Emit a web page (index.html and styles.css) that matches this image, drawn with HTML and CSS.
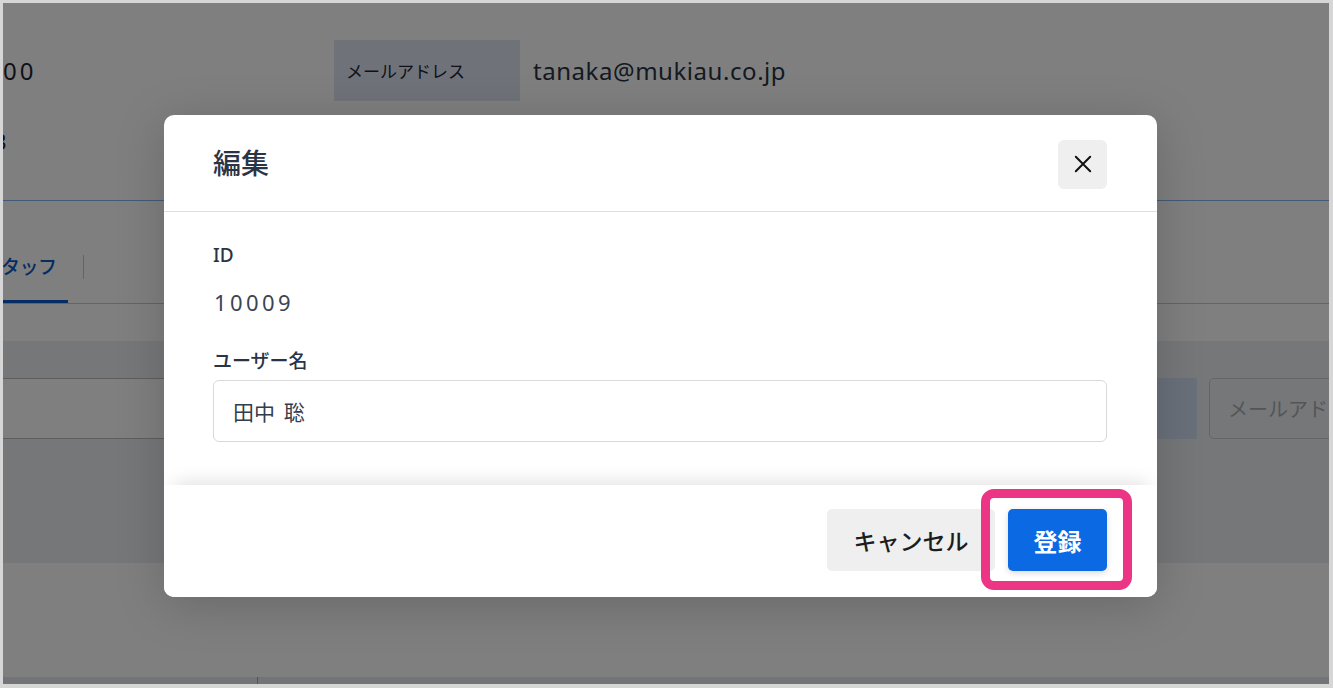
FILE: index.html
```html
<!DOCTYPE html>
<html lang="ja">
<head>
<meta charset="utf-8">
<title>編集</title>
<link rel="stylesheet" href="styles.css">
</head>
<body>
<div class="frame">
  <div class="page">
    <section class="info">
      <div class="info-row">
        <div class="info-cell num">00</div>
        <div class="info-label">メールアドレス</div>
        <div class="info-value">tanaka@mukiau.co.jp</div>
      </div>
      <div class="info-row second">
        <div class="info-cell clip"><span>3</span></div>
      </div>
    </section>
    <nav class="tabs">
      <div class="tab active">タッフ</div>
      <div class="tab-sep"></div>
    </nav>
    <section class="search">
      <div class="search-row">
        <div class="search-input wide"></div>
        <div class="search-btn"></div>
        <div class="search-input mail">メールアドレス</div>
      </div>
    </section>
    <div class="list-space"></div>
    <div class="table-head"><div class="th first"></div><div class="th"></div></div>
  </div>

  <div class="overlay">
    <div class="modal">
      <header class="modal-header">
        <h2 class="modal-title">編集</h2>
        <button class="close-btn" aria-label="閉じる">
          <svg width="20" height="20" viewBox="0 0 20 20"><path d="M2 2 L18 18 M18 2 L2 18" stroke="#111" stroke-width="2.2" stroke-linecap="round" fill="none"/></svg>
        </button>
      </header>
      <div class="modal-body">
        <div class="field">
          <div class="field-label">ID</div>
          <div class="field-value">10009</div>
        </div>
        <div class="field field-gap">
          <div class="field-label">ユーザー名</div>
          <div class="text-input">田中 聡</div>
        </div>
      </div>
      <footer class="modal-footer">
        <button class="btn btn-cancel">キャンセル</button>
        <div class="hl-wrap">
          <button class="btn btn-primary">登録</button>
          <span class="highlight"></span>
        </div>
      </footer>
    </div>
  </div>
</div>
</body>
</html>
```
FILE: styles.css
```css
* { box-sizing: border-box; }
html, body { margin: 0; padding: 0; }
body {
  font-family: "Noto Sans", "Noto Sans CJK JP", sans-serif;
  color: #1a202c;
  background: #fff;
}
.frame {
  position: relative;
  width: 1333px;
  height: 688px;
  border-style: solid;
  border-color: #d6d6d6;
  border-width: 3px 4px 4px 3px;
  overflow: hidden;
  background: #fff;
}
.page { display: flex; flex-direction: column; height: 100%; }

/* info */
.info {
  flex-shrink: 0;
  padding-top: 37px;
  height: 198px;
  border-bottom: 1px solid #86b4ee;
}
.info-row {
  display: grid;
  grid-template-columns: 331px 186px 1fr;
  height: 61px;
  align-items: center;
}
.info-row.second { height: 78px; }
.info-cell { font-size: 24px; letter-spacing: 3px; color: #1e2533; }
.info-cell.clip { overflow: hidden; }
.info-cell.clip span { display: inline-block; margin-left: -9px; font-size: 22px; }
.info-label {
  height: 61px;
  background: #dfe6f3;
  display: flex;
  align-items: center;
  padding-left: 12px;
  font-family: "Noto Sans CJK JP", sans-serif;
  font-size: 17px;
  color: #1e2533;
}
.info-value { padding-left: 13px; font-size: 24px; letter-spacing: 0.55px; color: #2a3342; }

/* tabs */
.tabs {
  flex-shrink: 0;
  display: flex;
  align-items: flex-end;
  height: 103px;
  border-bottom: 1px solid #c8c8c8;
}
.tab {
  font-family: "Noto Sans CJK JP", sans-serif;
  font-size: 19px;
  font-weight: 500;
  color: #0b5bc6;
  width: 67px;
  padding-bottom: 21px;
  border-bottom: 3px solid #0b5bc6;
  margin-left: -2px;
  letter-spacing: -0.5px;
}
.tab-sep {
  width: 1px;
  height: 24px;
  background: #c9c9c9;
  margin: 0 0 24px 15px;
}

/* search */
.search {
  flex-shrink: 0;
  margin-top: 37px;
  height: 222px;
  background: #edeff3;
  padding-top: 37px;
}
.search-row { display: flex; height: 61px; }
.search-row > div { flex-shrink: 0; }
.search-input.wide {
  width: 1147px;
  background: #fff;
  border-top: 1px solid #bdbdbd;
  border-bottom: 1px solid #bdbdbd;
  margin-left: -20px;
}
.search-btn {
  width: 54px;
  margin-left: 13px;
  background: #d5e1f4;
}
.search-input.mail {
  width: 200px;
  margin-left: 12px;
  border: 1px solid #c9cbd0;
  border-radius: 5px;
  padding-left: 18px;
  display: flex;
  align-items: center;
  font-family: "Noto Sans CJK JP", sans-serif;
  font-size: 20px;
  color: #a9abaf;
  white-space: nowrap;
}
.list-space { flex-shrink: 0; height: 114px; }
.table-head { flex-shrink: 0; display: flex; height: 10px; background: #e5e9f1; }
.th.first { width: 255px; border-right: 1px solid #a6a9ae; }

/* overlay + modal */
.overlay {
  position: absolute;
  inset: 0;
  background: rgba(0, 0, 0, 0.5);
  display: flex;
  align-items: flex-start;
  padding: 112px 0 0 161px;
}
.modal {
  width: 993px;
  height: 482px;
  background: #fff;
  border-radius: 10px;
  display: flex;
  flex-direction: column;
  overflow: hidden;
  box-shadow: 0 8px 50px rgba(0, 0, 0, 0.18);
}
.modal-header {
  height: 97px;
  border-bottom: 1px solid #dedede;
  display: flex;
  align-items: center;
  justify-content: space-between;
  padding: 0 50px 0 49px;
}
.modal-title {
  margin: 0 0 3px;
  font-family: "Noto Sans CJK JP", sans-serif;
  font-size: 28px;
  font-weight: 500;
  color: #2b3445;
}
.close-btn {
  width: 49px;
  height: 49px;
  border: none;
  border-radius: 6px;
  background: #efefef;
  display: flex;
  align-items: center;
  justify-content: center;
  padding: 0;
  margin-top: 2px;
}
.close-btn svg { width: 18px; height: 18px; }

.modal-body {
  flex: 1;
  padding: 30px 50px 0 49px;
}
.field-label {
  font-family: "Noto Sans", "Noto Sans CJK JP", sans-serif;
  font-size: 19px;
  line-height: 27px;
  font-weight: 500;
  color: #2b3444;
}
.field-value {
  margin-top: 18px;
  font-size: 22px;
  line-height: 30px;
  letter-spacing: 3.4px;
  color: #3a4455;
  padding-left: 1px;
}
.field-gap { margin-top: 31px; }
.text-input {
  margin-top: 5px;
  height: 62px;
  border: 1px solid #d9d9d9;
  border-radius: 6px;
  padding-left: 19px;
  display: flex;
  align-items: center;
  font-family: "Noto Sans CJK JP", sans-serif;
  font-size: 21px;
  word-spacing: 4px;
  color: #333c4c;
}

.modal-footer {
  position: relative;
  height: 112px;
  display: flex;
  justify-content: flex-end;
  align-items: flex-start;
  gap: 13px;
  padding: 24px 50px 0 0;
  background: #fff;
  box-shadow: 0 -12px 18px -10px rgba(0, 0, 0, 0.13);
}
.btn {
  height: 62px;
  border: none;
  border-radius: 5px;
  font-family: "Noto Sans CJK JP", sans-serif;
  padding: 0;
}
.btn-cancel {
  width: 168px;
  background: #efefef;
  font-size: 23px;
  font-weight: 500;
  color: #1d1d1d;
}
.hl-wrap { position: relative; }
.btn-primary {
  width: 99px;
  background: #0b69e3;
  color: #fff;
  font-size: 24px;
  font-weight: 700;
  box-shadow: 0 2px 6px rgba(0, 0, 0, 0.15);
}
.highlight {
  position: absolute;
  left: -27px;
  right: -25px;
  top: -20px;
  bottom: -19px;
  border: 9px solid #ec3584;
  border-radius: 13px;
  pointer-events: none;
}
```
